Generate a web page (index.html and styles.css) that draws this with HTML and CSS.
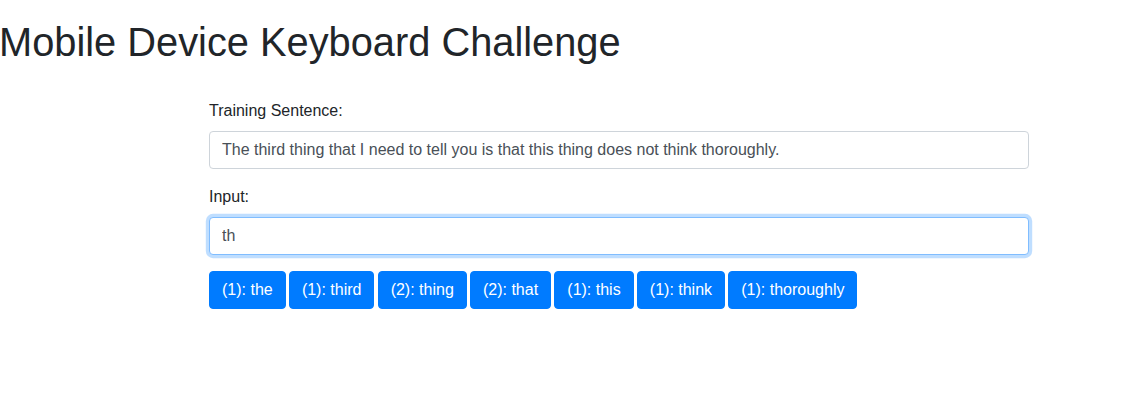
FILE: index.html
```html
<!DOCTYPE html>
<html lang="en">
<head>
<meta charset="utf-8">
<title>Mobile Device Keyboard Challenge</title>
<link rel="stylesheet" href="styles.css">
</head>
<body>
<h1 class="title">Mobile Device Keyboard Challenge</h1>
<div class="panel">
  <div class="form-group">
    <label class="label" for="train">Training Sentence:</label>
    <input id="train" class="form-control" type="text" value="The third thing that I need to tell you is that this thing does not think thoroughly." readonly>
  </div>
  <div class="form-group">
    <label class="label" for="inp">Input:</label>
    <input id="inp" class="form-control focused" type="text" value="th" autofocus>
  </div>
  <div class="suggestions">
    <button class="btn">(1): the</button>
    <button class="btn">(1): third</button>
    <button class="btn">(2): thing</button>
    <button class="btn">(2): that</button>
    <button class="btn">(1): this</button>
    <button class="btn">(1): think</button>
    <button class="btn">(1): thoroughly</button>
  </div>
</div>
</body>
</html>
```
FILE: styles.css
```css
html, body {
  margin: 0;
  padding: 0;
  background: #fff;
}
body {
  font-family: "Liberation Sans", Arial, Helvetica, sans-serif;
  font-size: 16px;
  line-height: 1.5;
  color: #212529;
}
.title {
  font-size: 39.8px;
  font-weight: normal;
  line-height: 1.2;
  margin: 19px 0 8px -1px;
}
.panel {
  margin: 32px 0 0 209px;
  width: 820px;
}
.form-group {
  margin-bottom: 16px;
}
.label {
  display: inline-block;
  margin-bottom: 8px;
}
.form-control {
  display: block;
  box-sizing: border-box;
  width: 100%;
  height: 38px;
  padding: 6px 12px;
  font-family: inherit;
  font-size: 16px;
  line-height: 1.5;
  color: #495057;
  background: #fff;
  border: 1px solid #ced4da;
  border-radius: 4px;
  margin: 0;
  outline: none;
}
.form-control.focused, .form-control:focus {
  border-color: #80bdff;
  box-shadow: 0 0 0 3.2px rgba(0, 123, 255, 0.25);
  outline: none;
}
.suggestions {
  display: flex;
  gap: 3.2px;
}
.btn {
  font-family: inherit;
  font-size: 16px;
  line-height: 1.5;
  color: #fff;
  background: #007bff;
  border: 1px solid #007bff;
  border-radius: 4px;
  padding: 6px 12px;
  margin: 0;
  cursor: pointer;
}
```
